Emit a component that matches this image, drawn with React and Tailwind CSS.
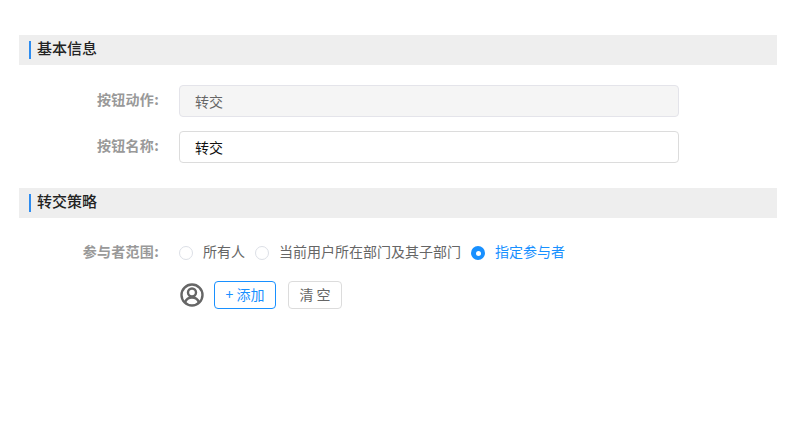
const fontStack = { fontFamily: '"Noto Sans CJK SC", "Liberation Sans", sans-serif' };

function SectionTitle({ title }) {
  return (
    <div className="flex h-[30px] items-center bg-[#eeeeee] pl-[10px]">
      <span className="h-[18px] w-[2px] bg-[#2d8cf0]" />
      <span className="ml-[6px] pb-[3px] text-[15px] font-medium text-[#222222]">{title}</span>
    </div>
  );
}

function FormRow({ label, children, className = '' }) {
  return (
    <div className={`flex items-center ${className}`}>
      <label className="w-[140px] pb-[5px] text-right text-sm font-bold leading-none tracking-[0.3px] text-[#999999]">{label}</label>
      <div className="ml-[20px]">{children}</div>
    </div>
  );
}

function Radio({ label, checked }) {
  return (
    <label className={`flex items-center text-sm ${checked ? 'text-[#1890ff]' : 'text-[#666666]'}`}>
      {checked ? (
        <span className="flex h-[14px] w-[14px] items-center justify-center rounded-full bg-[#1890ff]">
          <span className="h-[5px] w-[5px] rounded-full bg-white" />
        </span>
      ) : (
        <span className="h-[14px] w-[14px] rounded-full border border-[#dcdfe6] bg-white" />
      )}
      <span className="ml-[10px] pb-[4px]">{label}</span>
    </label>
  );
}

export default function App() {
  return (
    <div className="min-h-[423px] bg-white pt-[35px] pr-[16px] pl-[19px]" style={fontStack}>
      <SectionTitle title="基本信息" />

      <FormRow label="按钮动作:" className="mt-[20px]">
        <input
          disabled
          value="转交"
          readOnly
          className="h-[32px] w-[500px] rounded border border-[#e4e4ea] bg-[#f5f5f5] px-[15px] text-sm text-[#666666] outline-none"
        />
      </FormRow>
      <FormRow label="按钮名称:" className="mt-[14px]">
        <input
          value="转交"
          readOnly
          className="h-[32px] w-[500px] rounded border border-[#dcdcdc] bg-white px-[15px] text-sm text-[#111111] outline-none"
        />
      </FormRow>

      <div className="mt-[25px]">
        <SectionTitle title="转交策略" />
      </div>

      <FormRow label="参与者范围:" className="mt-[25px] h-[20px]">
        <div className="flex items-center gap-[10px]">
          <Radio label="所有人" />
          <Radio label="当前用户所在部门及其子部门" />
          <Radio label="指定参与者" checked />
        </div>
      </FormRow>

      <div className="mt-[18px] ml-[160px] flex items-center">
        <svg width="26" height="26" viewBox="0 0 26 26" fill="none" stroke="#666666" strokeWidth="2.4" className="-mt-[1px]">
          <circle cx="13" cy="13" r="10.5" />
          <circle cx="13" cy="10.5" r="4" />
          <path d="M6 20.5c1.2-3.4 3.8-5 7-5s5.800 1.600 7 5" />
        </svg>
        <button className="ml-[9px] h-[28px] w-[62px] rounded border border-[#1890ff] bg-white pb-[2px] text-sm text-[#1890ff]">
          + 添加
        </button>
        <button className="ml-[12px] h-[28px] w-[54px] rounded border border-[#dcdcdc] bg-white pb-[2px] text-sm text-[#666666]">
          清 空
        </button>
      </div>
    </div>
  );
}
